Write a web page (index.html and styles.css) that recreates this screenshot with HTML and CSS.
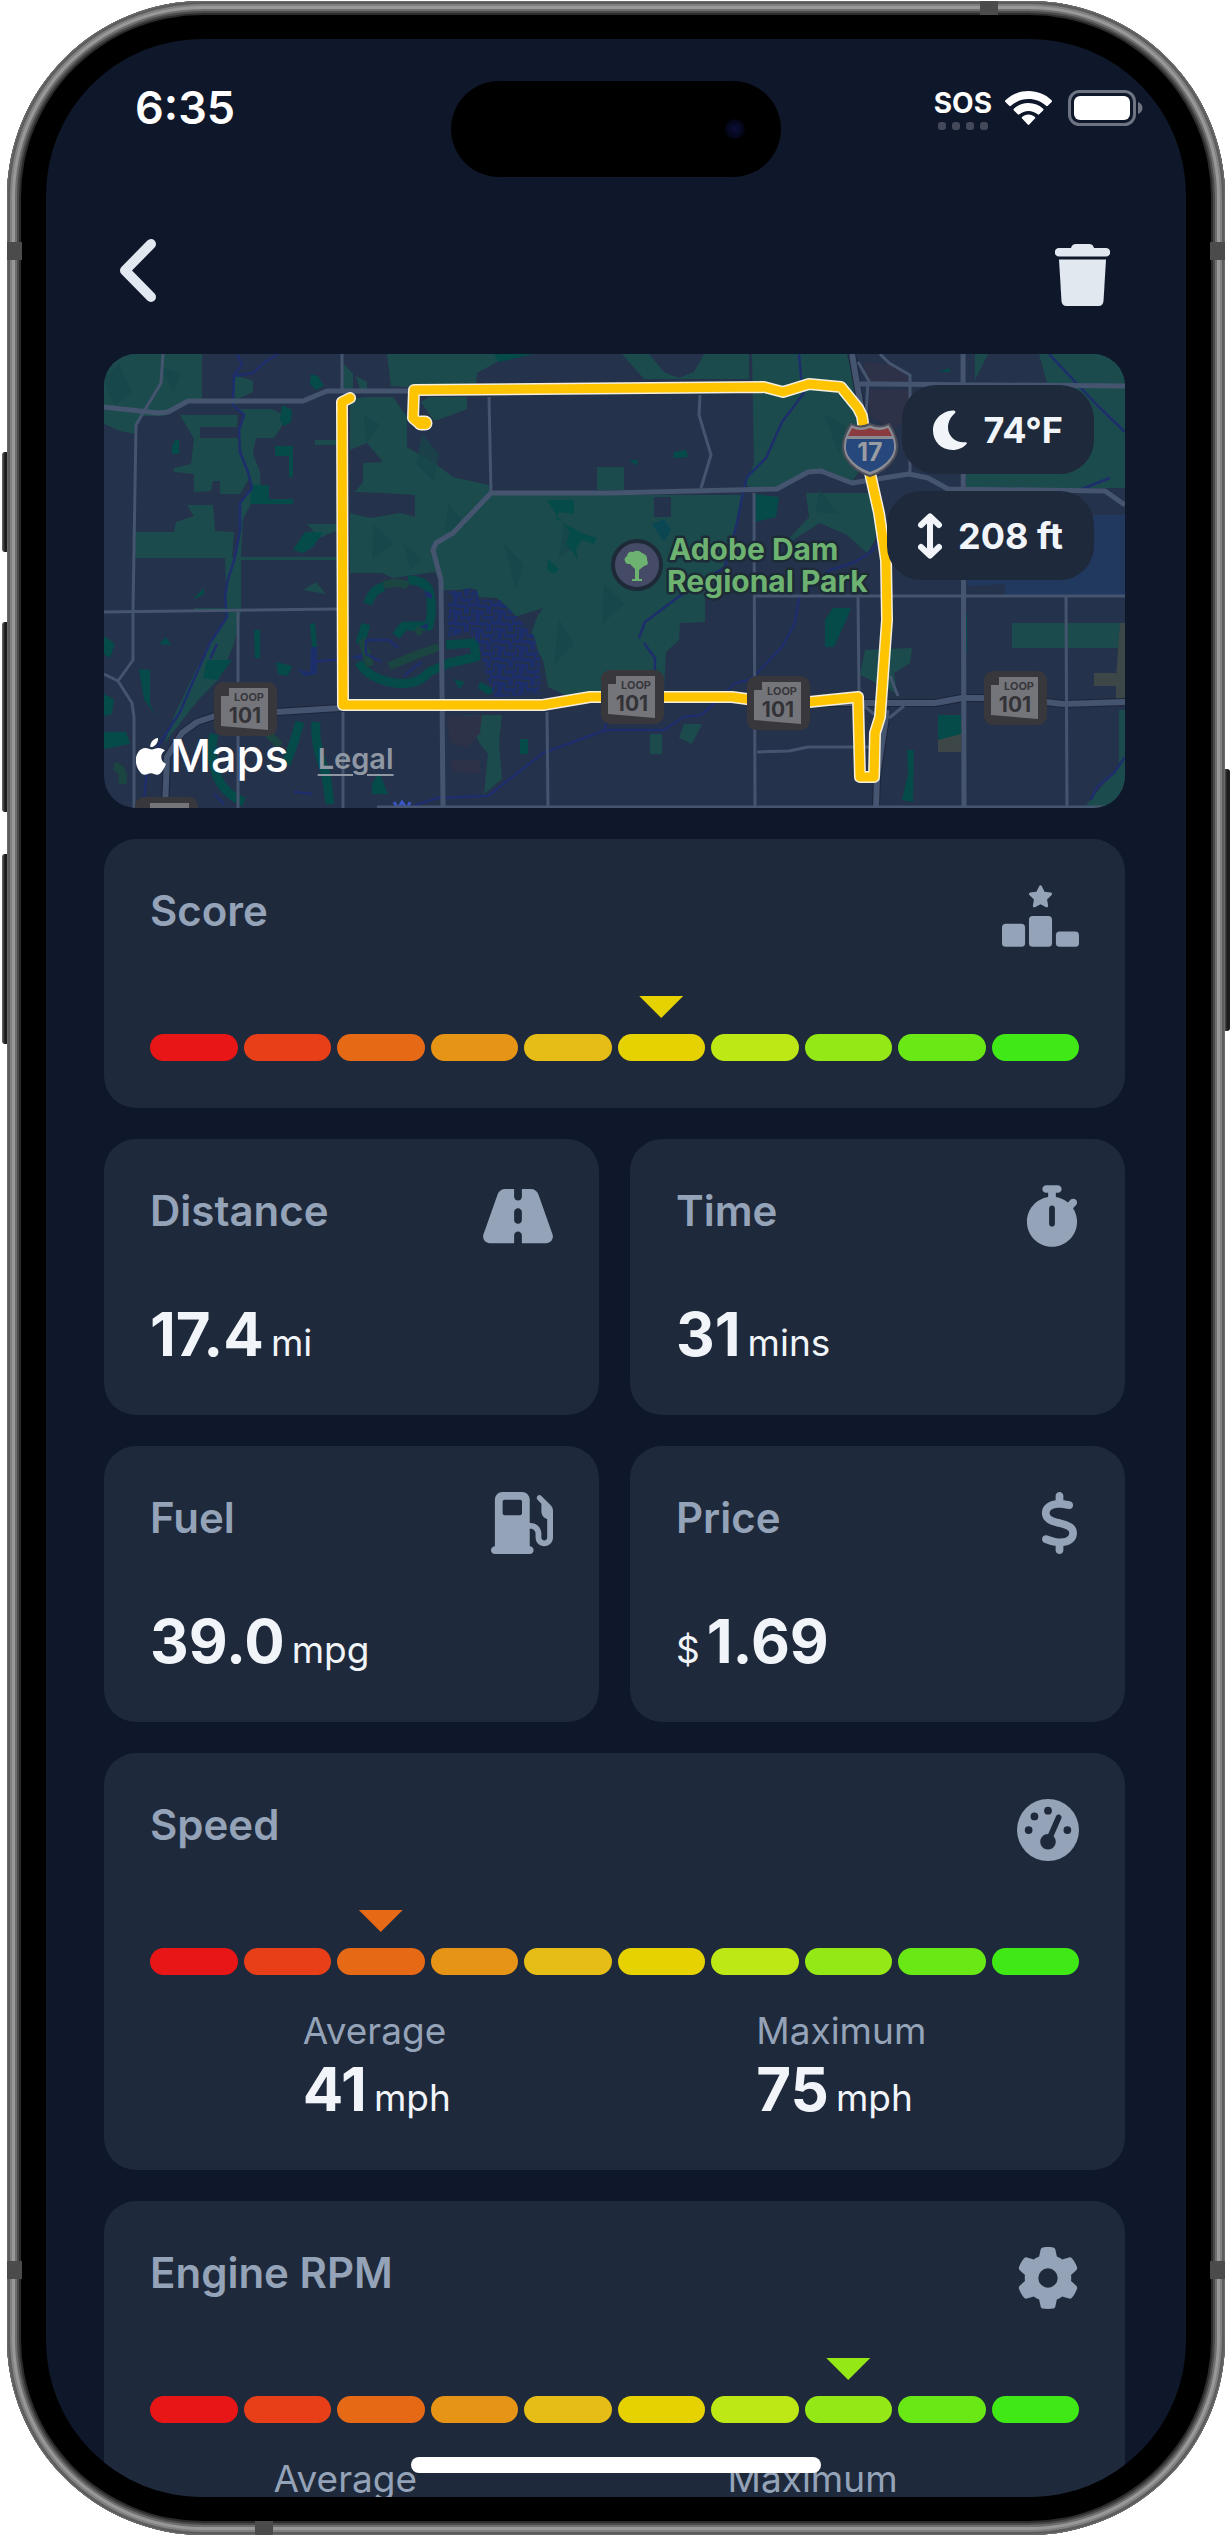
FILE: index.html
```html
<!DOCTYPE html>
<html lang="en">
<head>
<meta charset="utf-8">
<meta name="viewport" content="width=device-width, initial-scale=1">
<title>Trip details</title>
<link rel="stylesheet" href="styles.css">
</head>
<body>
<div class="device">
  <span class="key key-action"></span>
  <span class="key key-up"></span>
  <span class="key key-down"></span>
  <span class="key key-power"></span>
  <div class="frame">
    <span class="band band-left-top"></span>
    <span class="band band-right-top"></span>
    <span class="band band-left-bottom"></span>
    <span class="band band-right-bottom"></span>
    <span class="band band-top"></span>
    <span class="band band-bottom"></span>
    <div class="screen">
      <div class="status">
        <span class="clock">6:35</span>
        <div class="island"><span class="lens"></span></div>
        <div class="signals">
          <div class="sos">
            <span>SOS</span>
            <div class="dots"><i></i><i></i><i></i><i></i></div>
          </div>
          <svg class="wifi" viewBox="0 0 47 34" width="47" height="34" aria-hidden="true">
            <path fill="#fff" d="M23.500 0C14.500 0 6.300 3.500 .400 9.200a1.200 1.200 0 0 0 0 1.700l3.800 3.900a1.200 1.200 0 0 0 1.700 0C10.500 10.600 16.700 8 23.500 8s13 2.600 17.600 6.800a1.200 1.200 0 0 0 1.700 0l3.800-3.900a1.200 1.200 0 0 0 0-1.700C40.700 3.500 32.500 0 23.500 0z"/>
            <path fill="#fff" d="M23.500 12c-5.700 0-10.800 2.200-14.600 5.700a1.200 1.200 0 0 0 0 1.700l3.900 3.900a1.200 1.200 0 0 0 1.600 0c2.400-2.100 5.600-3.400 9.100-3.400s6.700 1.300 9.100 3.400a1.200 1.200 0 0 0 1.600 0l3.900-3.900a1.200 1.200 0 0 0 0-1.700C34.300 14.200 29.200 12 23.500 12z"/>
            <path fill="#fff" d="M23.500 23.600c-2.500 0-4.700.9-6.400 2.400a1.100 1.100 0 0 0 0 1.600l5.600 5.900a1.100 1.100 0 0 0 1.600 0l5.600-5.900a1.100 1.100 0 0 0 0-1.600c-1.700-1.500-3.900-2.400-6.400-2.400z"/>
          </svg>
          <svg class="battery" viewBox="0 0 75 36" width="75" height="36" aria-hidden="true">
            <rect x="1.500" y="1.500" width="65" height="33" rx="10" fill="none" stroke="#6f7482" stroke-width="3"/>
            <rect x="6" y="6" width="56" height="24" rx="6" fill="#fff"/>
            <path d="M70 12c3 1 4.500 3.500 4.500 6s-1.500 5-4.500 6z" fill="#6f7482"/>
          </svg>
        </div>
      </div>

      <header class="nav">
        <button class="nav-button" type="button" aria-label="Back">
          <svg viewBox="0 0 38 65" width="38" height="65"><path d="M32 6L6 32.500L32 59" fill="none" stroke="#e2e8f0" stroke-width="10" stroke-linecap="round" stroke-linejoin="round"/></svg>
        </button>
        <button class="nav-button nav-delete" type="button" aria-label="Delete">
          <svg viewBox="0 0 55 62" width="55" height="62" fill="#e2e8f0">
            <path d="M4 4h12c1-3 2-4 5-4h13c3 0 4 1 5 4h12a4 4 0 0 1 0 8.500H4A4 4 0 0 1 4 4z"/>
            <path d="M4 15.500h47L48.500 57c-.3 3.500-2 5-5 5h-32c-3 0-4.700-1.500-5-5z"/>
          </svg>
        </button>
      </header>

      <main class="cards">
        <section class="map">
          <svg class="map-art" viewBox="0 0 1021 454" aria-hidden="true">
            <defs>
              <pattern id="maze" width="22" height="18" patternUnits="userSpaceOnUse">
                <path d="M0 3h7v6h7V2h8M3 9v6h8v3M18 6v8h-4M0 15h1" fill="none" stroke="#25324b" stroke-width="2"/>
              </pattern>
              <g id="loop">
                <rect width="63" height="54" rx="9" fill="#37373c"/>
                <path d="M15 6h39v42L7 44V14h8z" fill="#74757a"/>
                <text x="35" y="19" class="loop-word">LOOP</text>
                <text x="31" y="41" class="loop-number">101</text>
              </g>
            </defs>
            <rect width="1021" height="454" fill="#25324b"/>
            <g fill="#1b4b4d">
              <path d="M0 0H98V45L75 52 60 62H36L30 80 16 77 0 70z"/>
              <path d="M76 61H134L133 73H96V84H136L137 100 145 125 136 140H116V127H109L107 137 90 138V120L70 118V114L87 110 90 85z"/>
              <path d="M131 21L149 27V38L132 46 131 55H168L182 62 178 72 170 84H152L149 100 156 118 157 135 147 150 139 165 137 204V258L130 290 115 325 95 345 80 364 60 390 70 362 90 320 106 289 123 263 121 204 131 203 136 176V149L148 134 136 98 135 76 140 61 129 51z"/>
              <path d="M83 151H109L111 177 130 178 128 204H31V178H70L72 168 90 162z"/>
              <path d="M283 0H402L393 8 373 19 372 33H300L287 32z"/>
              <path d="M239 9L249 20V35H239zM252 22L263 28V36H256zM325 43H363V55L345 62 330 67 317 48z"/>
              <path d="M262 43H289L303 63V93L333 111 349 123 384 131 390 141H640L633 169 619 213 601 243V268L576 269 575 286 562 298 560 335 496 339 470 345 444 333 439 306 426 283 433 263 439 254 411 263 393 244 374 243 371 236H339L331 218 289 224 278 219H246V159L266 164 296 159 311 163V141L279 139 251 138 259 128V109L279 108 263 89 246 96V45z"/>
              <path d="M493 113H520V136H493zM518 0H545L560 18 575 24 590 18 600 0H645V25H540zM648 0H743L756 53 758 113 748 128 722 116H704L675 134 650 138 641 129 650 110z"/>
              <path d="M702 139H776L771 186 763 199 743 181 716 169 689 186 677 193 705 163z"/>
              <path d="M871 0H884L871 26zM935 0H1021V134H862V98L880 110 900 90H960z"/>
              <path d="M908 269H1016V294H908zM1015 356H1021V430L1010 454H980L1004 425 1015 410z"/>
              <path d="M761 296L808 294 806 309 790 319 793 340 775 330 756 321zM361 361H398L395 390 398 425 380 440 384 400 376 390zM546 380H558V400H546zM580 370H598L588 390 575 384z"/>
              <path d="M211 86H234V91H211zM203 170H234V176L215 184zM137 203H234V206H137zM90 254H130V258H90zM199 236L212 228 222 240z"/>
            </g>
            <g fill="#15464a" opacity=".7">
              <path d="M0 25L15 10 28 38 10 52zM55 12L76 20 70 38zM318 80L335 100 330 128 312 110zM260 60L275 70 262 90zM345 150L362 172 340 178zM400 190L420 210 412 236zM460 170L478 185 455 205zM270 170L290 190 268 205zM300 190L318 205 306 216zM455 265L470 290 450 310zM500 230L520 250 498 270zM720 60L742 72 735 100zM715 135L735 160 712 158z"/>
            </g>
            <g fill="#044b49">
              <path d="M178 51L188 56 187 68 180 72 176 66zM207 20L214 22 220 32 212 36 206 30zM171 92H189V123H185V102H171zM148 131H165V145H189V150H146zM201 178H219L209 193 199 199 189 196zM68 92L71 86H75V100H68zM103 306H128L113 326 99 324zM90 244L100 234V240L93 244zM55 290L62 283 67 291zM150 276H156V304H151zM206 270L211 269 213 293H208zM172 308L188 312 184 322 174 320zM35 315L46 316V350L52 362 40 345zM443 146H470V160L455 158 452 165 480 180 493 184 490 190 478 186 472 195 474 205 462 190 466 178 455 165zM444 205L455 215 450 220 443 216z"/>
              <path d="M651 140L675 143 672 163 651 168zM729 254H747L743 264 730 293H721V266zM834 361H857V380L840 389 834 385zM803 396H810L809 448 798 446 804 420zM859 254L863 260V300H859zM570 98L582 96 584 103 569 104zM525 106L534 106 533 112zM835 18L845 14 846 18zM0 282L11 290 6 304 0 300zM390 0H430L395 8zM268 430L275 418 284 440H268zM416 385H424V400H416zM376 328L392 336 384 341 374 334zM350 325L361 328 355 335zM0 378H22L26 390 0 395zM0 340L10 345 8 360 0 362z"/>
            </g>
            <g fill="none" stroke="#044b49" stroke-width="9" stroke-linejoin="round">
              <path d="M264 250Q268 235 280 233M304 226Q320 226 325 236 330 252 325 272L300 272 292 282M342 291L370 289 372 303 345 309 325 318Q312 334 285 328 262 322 255 308M262 270L256 290M196 368Q190 390 182 410M212 368Q210 390 222 420L226 450M110 380Q105 400 112 420 120 440 140 448"/>
            </g>
            <path d="M280 231Q295 226 304 232M258 285L266 312M285 312L315 300 335 293M312 275L318 279M160 375L176 392M10 412Q22 415 18 430" fill="none" stroke="#1b4540" stroke-width="8"/>
            <g fill="#1c2f6b">
              <path d="M344 238L366 234 373 236 375 246 396 246 412 262 430 282 436 305 437 340 391 343 380 315 375 290 365 278 344 283V250L350 244z"/>
              <path d="M320 236L328 240V245L322 243zM316 273L324 269 323 275zM193 315L206 318 207 293H213V320L200 322zM246 303L258 300V306z"/>
            </g>
            <path d="M344 238L366 234 373 236 375 246 396 246 412 262 430 282 436 305 437 340 391 343 380 315 375 290 365 278 344 283z" fill="url(#maze)"/>
            <path d="M863 226H901V161H1021V241H901V230L863 232z" fill="#22395f"/>
            <path d="M550 143H567V163H550z" fill="#25324b"/>
            <path d="M548 170L560 165 567 176 560 188z" fill="#0b4653"/>
            <path d="M760 8L785 10 805 22V28H762zM764 36H805V65L790 75 766 62zM343 363L378 361 376 379 363 394 346 388zM346 406H376V419L350 418z" fill="#2e3248"/>
            <path d="M1016 269H1021V345H1012V325zM834 386L857 380V398H834zM990 319H1012V332H990z" fill="#3d4747"/>

            <g fill="none" stroke="#1e2e6c" stroke-width="2.500" stroke-linejoin="round">
              <path d="M133 0L138 11 130 21 129 51 140 61 135 76 136 98 144 118 148 134 136 149V176L131 203 123 229 121 244 123 263 106 289 91 323 76 358 56 389 43 416 39 454M130 22L149 19 161 8 174 0"/>
              <path d="M695 0L697 23 700 39 678 68 662 104 643 123 638 143 633 169 621 213 577 241 541 268 535 284M540 289L551 304V316"/>
              <path d="M776 186L766 199 749 209 726 216 695 243 691 269 678 293 653 319 645 326 631 329 618 343 597 361 579 363 560 376H506L499 377 439 399 384 442 333 444 306 453M499 377L505 365"/>
              <path d="M945 0L993 51 1021 78M970 138L1006 124M1021 403L1010 419 993 433 987 446M208 308L245 304M262 286V300M262 286L285 286 294 294M262 300L278 308M300 322L312 312 318 308M113 290L106 305M110 440L120 450M190 438L208 440"/>
            </g>
            <path d="M290 448L294 455 298 448 303 455 306 448" fill="none" stroke="#3b56c4" stroke-width="3"/>

            <g fill="none" stroke="#1c263a" stroke-linejoin="round" stroke-width="8">
              <path d="M61 454L63 403 78 379 93 368 111 362 173 358 236 354M705 349H831L858 344H878L942 348 959 350 1021 348M748 0L758 59M783 356L773 423 772 454"/>
            </g>
            <g fill="none" stroke="#45546f" stroke-linejoin="round">
              <g stroke-width="3">
                <path d="M59 0L57 29 39 59 32 71 29 256V306L14 327 0 320M14 327L28 349 30 363V454M0 258L234 255M238 0V37M239 358V454M134 258V454M385 43L387 139M443 358L444 454M273 453H1021"/>
                <path d="M596 41L595 61 607 101 597 134M650 139L651 454M651 242H1021M754 243L755 339M962 242L963 454M776 0L785 9 806 21V119M653 398L685 397 704 393H766M754 8L766 29 773 31M762 60L764 28M786 322L794 342M760 352L775 364M800 352L785 364"/>
              </g>
              <g stroke-width="5">
                <path d="M0 53L54 59 64 58 84 47H199L223 37H304M339 454L337 226 329 196 332 189 349 179 387 139H506L673 135 704 118 717 117 748 129 805 120 824 124 844 135 1001 137 1021 151M859 0L860 454M752 30H773L1021 32"/>
              </g>
              <g stroke-width="6">
                <path d="M61 454L63 403 78 379 93 368 111 362 173 358 236 354M705 349H831L858 344H878L942 348 959 350 1021 348M748 0L758 59M783 356L773 423 772 454"/>
              </g>
            </g>

            <g fill="none" stroke-linejoin="round" stroke-linecap="round">
              <path stroke="#f5efdc" stroke-width="12" d="M246 44L238 48 239 351H439L486 343H628L643 345 705 348 754 343 756 423H770L771 379 776 363 783 266 782 206 775 159 766 119 758 62 754 54 737 33 705 30 679 38 660 33 310 36 309 64 316 70H322"/>
              <path stroke="#f5efdc" stroke-width="15" d="M317 69H321"/>
              <path stroke="#ffc400" stroke-width="12" d="M317 69H321"/>
              <path stroke="#ffc400" stroke-width="9" d="M246 44L238 48 239 351H439L486 343H628L643 345 705 348 754 343 756 423H770L771 379 776 363 783 266 782 206 775 159 766 119 758 62 754 54 737 33 705 30 679 38 660 33 310 36 309 64 316 70H322"/>
            </g>

            <use href="#loop" x="110" y="328"/>
            <use href="#loop" x="497" y="316"/>
            <use href="#loop" x="643" y="322"/>
            <use href="#loop" x="880" y="317"/>
            <use href="#loop" x="31" y="443"/>

            <path d="M747 70Q756 75 766 70 776 75 785 70 798 90 790 104 782 117 766 122 750 117 742 104 734 90 747 70z" fill="#8b8b93" stroke="#4c4e5a" stroke-width="2"/>
            <path d="M748 74Q757 78 766 74 775 78 784 74L788 82H744z" fill="#8a3b3f"/>
            <path d="M743 85H789Q792 96 787 103 780 113 766 118 752 113 745 103 740 96 743 85z" fill="#27487c"/>
            <text x="766" y="107" class="interstate">17</text>

            <circle cx="533" cy="211" r="24" fill="#454b66" stroke="#1f2a38" stroke-width="4"/>
            <path d="M531 225V215L526 210H523Q518 205 523 202 524 197 529 198 534 195 538 199 544 201 543 206 546 211 540 212L535 216V225H538V227H528V225z" fill="#6db270"/>
            <text class="park" x="565" y="206">Adobe Dam</text>
            <text class="park" x="563" y="238">Regional Park</text>
          </svg>
          <div class="chips">
            <div class="chip">
              <svg viewBox="0 0 34 40" width="34" height="40" aria-hidden="true"><path d="M20 0.500C9 1 0 9.500 0 20.500S8.500 40 19.500 40c6 0 11-2.500 14-6 .8-1 0-2-1.200-1.800C24 33.500 15 27 15 17.500c0-6 3-11 7-14.500 1-1 .5-2.500-2-2.500z" fill="#f1f5f9"/></svg>
              <span>74°F</span>
            </div>
            <div class="chip">
              <svg viewBox="0 0 24 46" width="24" height="46" aria-hidden="true"><path d="M12 4V42M3 12L12 3.500 21 12M3 34L12 42.500 21 34" fill="none" stroke="#f1f5f9" stroke-width="6" stroke-linecap="round" stroke-linejoin="round"/></svg>
              <span>208 ft</span>
            </div>
          </div>
          <div class="credit">
            <svg viewBox="0 0 30 37" width="30" height="37" aria-hidden="true"><path fill="#fff" d="M22 0c.3 2.500-.7 4.800-2.100 6.400-1.500 1.700-3.600 2.800-5.600 2.600-.3-2.400.9-4.700 2.200-6.200C17.900 1.200 20.200.1 22 0zM29 12.500c-2.400 1.400-3.800 3.600-3.800 6.400 0 3.300 2 5.900 4.800 6.900-.6 2-1.600 4-2.900 5.900-1.700 2.600-3.500 5.100-6.200 5.100-2.500 0-3.300-1.500-6-1.500s-3.700 1.500-6 1.500c-2.700 0-4.600-2.400-6.300-4.900C-.5 27-1.500 19.500 2 14.500c1.700-2.700 4.600-4.400 7.400-4.400 2.600 0 4.300 1.500 6.400 1.500 2 0 3.700-1.600 6.700-1.600 2.400 0 4.900 1 6.500 2.500z"/></svg>
            <span class="credit-name">Maps</span>
            <a class="legal" href="#legal">Legal</a>
          </div>
        </section>

        <section class="card">
          <div class="card-head">
            <h2>Score</h2>
            <svg viewBox="0 0 640 512" width="77" height="62" class="icon" aria-hidden="true"><path d="M353.800 54.100L330.200 6.300c-3.900-8.300-16.100-8.600-20.400 0L286.200 54.100l-52.300 7.500c-9.300 1.400-13.300 12.900-6.400 19.800l38 37-9 52.100c-1.400 9.300 8.200 16.500 16.800 12.200l46.900-24.800 46.600 24.400c8.600 4.300 18.300-2.900 16.800-12.200l-9-52.100 38-36.600c6.800-6.800 2.900-18.300-6.400-19.800z"/><rect y="320" width="192" height="192" rx="32"/><rect x="224" y="256" width="192" height="256" rx="32"/><rect x="448" y="384" width="192" height="128" rx="32"/></svg>
          </div>
          <div class="gauge">
            <i class="marker at-6"></i>
            <i class="seg s1"></i><i class="seg s2"></i><i class="seg s3"></i><i class="seg s4"></i><i class="seg s5"></i><i class="seg s6"></i><i class="seg s7"></i><i class="seg s8"></i><i class="seg s9"></i><i class="seg s10"></i>
          </div>
        </section>

        <div class="pair">
          <section class="card">
            <div class="card-head">
              <h2>Distance</h2>
              <svg viewBox="0 0 576 512" width="70" height="62" class="icon" aria-hidden="true"><path d="M256 32H181.200c-27.100 0-51.300 17.100-60.300 42.600L3.100 407.200C1.100 413 0 419.200 0 425.400C0 455.500 24.500 480 54.600 480H256V416c0-17.700 14.300-32 32-32s32 14.300 32 32v64H521.400c30.200 0 54.600-24.500 54.600-54.600c0-6.200-1.100-12.400-3.100-18.200L455.100 74.600C446 49.100 421.900 32 394.800 32H320V96c0 17.700-14.300 32-32 32s-32-14.300-32-32V32zm64 192v64c0 17.700-14.300 32-32 32s-32-14.300-32-32V224c0-17.700 14.300-32 32-32s32 14.300 32 32z"/></svg>
            </div>
            <p class="reading"><strong>17.4</strong><span>mi</span></p>
          </section>
          <section class="card">
            <div class="card-head">
              <h2>Time</h2>
              <svg viewBox="0 0 448 512" width="54" height="62" class="icon" aria-hidden="true"><path d="M176 0c-17.700 0-32 14.300-32 32s14.300 32 32 32h16V98.400C92.300 113.800 16 200 16 304c0 114.900 93.100 208 208 208s208-93.100 208-208c0-41.800-12.300-80.700-33.500-113.200l24.100-24.100c12.500-12.500 12.500-32.800 0-45.300s-32.800-12.500-45.300 0L355.700 143c-28.100-23-62.200-38.800-99.700-44.600V64h16c17.700 0 32-14.300 32-32s-14.300-32-32-32H176zm72 192V320c0 13.300-10.700 24-24 24s-24-10.700-24-24V192c0-13.300 10.700-24 24-24s24 10.700 24 24z"/></svg>
            </div>
            <p class="reading"><strong>31</strong><span>mins</span></p>
          </section>
        </div>

        <div class="pair">
          <section class="card">
            <div class="card-head">
              <h2>Fuel</h2>
              <svg viewBox="0 0 512 512" width="62" height="62" class="icon" aria-hidden="true"><path d="M32 64C32 28.700 60.700 0 96 0H256c35.300 0 64 28.700 64 64V256h8c48.600 0 88 39.400 88 88v32c0 13.300 10.700 24 24 24s24-10.700 24-24V222c-27.600-7.100-48-32.200-48-62V96L384 64c-8.800-8.800-8.800-23.200 0-32s23.200-8.800 32 0l77.300 77.300c12 12 18.700 28.300 18.700 45.300V376c0 39.800-32.200 72-72 72s-72-32.200-72-72V344c0-22.100-17.900-40-40-40h-8V448c17.700 0 32 14.300 32 32s-14.300 32-32 32H32c-17.700 0-32-14.300-32-32s14.300-32 32-32V64zM96 80v96c0 8.800 7.200 16 16 16H240c8.800 0 16-7.200 16-16V80c0-8.800-7.200-16-16-16H112c-8.800 0-16 7.200-16 16z"/></svg>
            </div>
            <p class="reading"><strong>39.0</strong><span>mpg</span></p>
          </section>
          <section class="card">
            <div class="card-head">
              <h2>Price</h2>
              <svg viewBox="0 0 320 512" width="39" height="62" class="icon" aria-hidden="true"><path d="M160 0c17.700 0 32 14.300 32 32V67.700c1.600 .2 3.100 .4 4.700 .7c.4 .1 .7 .1 1.100 .2l48 8.800c17.400 3.200 28.900 19.900 25.700 37.200s-19.900 28.900-37.200 25.700l-47.500-8.700c-31.300-4.600-58.900-1.500-78.300 6.200s-27.200 18.300-29 28.100c-2 10.700-.5 16.700 1.200 20.400c1.800 3.900 5.500 8.300 12.800 13.200c16.300 10.700 41.300 17.700 73.700 26.300l2.900 .8c28.600 7.600 63.600 16.800 89.600 33.800c14.200 9.300 27.600 21.900 35.900 39.500c8.500 17.900 10.300 37.900 6.400 59.200c-6.900 38-33.100 63.400-65.600 76.700c-13.700 5.600-28.600 9.200-44.400 11V480c0 17.700-14.300 32-32 32s-32-14.300-32-32V445.100c-.4-.1-.9-.1-1.300-.2l-.2 0c-24.400-3.800-64.500-14.300-91.500-26.300c-16.100-7.200-23.400-26.100-16.200-42.200s26.100-23.400 42.200-16.200c20.900 9.300 55.300 18.500 75.200 21.600c31.900 4.700 58.200 2 76-5.300c16.900-6.900 24.600-16.900 26.800-28.900c1.900-10.600 .4-16.700-1.300-20.400c-1.900-4-5.600-8.400-13-13.300c-16.400-10.700-41.500-17.700-74-26.300l-2.800-.7C119.400 279.300 84.400 270 58.400 253c-14.200-9.300-27.500-22-35.800-39.600c-8.400-17.900-10.100-37.900-6.100-59.200C23.700 116 52.300 91.200 84.800 78.300c13.300-5.300 27.900-8.900 43.200-11V32c0-17.700 14.300-32 32-32z"/></svg>
            </div>
            <p class="reading"><span>$</span><strong>1.69</strong></p>
          </section>
        </div>

        <section class="card">
          <div class="card-head">
            <h2>Speed</h2>
            <svg viewBox="0 0 512 512" width="62" height="62" class="icon" aria-hidden="true"><path d="M0 256a256 256 0 1 1 512 0A256 256 0 1 1 0 256zM288 96a32 32 0 1 0 -64 0 32 32 0 1 0 64 0zM256 416c35.300 0 64-28.700 64-64c0-17.400-6.900-33.100-18.100-44.600L366 161.700c5.300-12.100-.2-26.300-12.300-31.600s-26.300 .2-31.600 12.300L257.900 288c-.6 0-1.300 0-1.900 0c-35.300 0-64 28.700-64 64s28.700 64 64 64zM176 144a32 32 0 1 0 -64 0 32 32 0 1 0 64 0zM96 288a32 32 0 1 0 0-64 32 32 0 1 0 0 64zm352-32a32 32 0 1 0 -64 0 32 32 0 1 0 64 0z"/></svg>
          </div>
          <div class="gauge">
            <i class="marker at-3"></i>
            <i class="seg s1"></i><i class="seg s2"></i><i class="seg s3"></i><i class="seg s4"></i><i class="seg s5"></i><i class="seg s6"></i><i class="seg s7"></i><i class="seg s8"></i><i class="seg s9"></i><i class="seg s10"></i>
          </div>
          <dl class="stats">
            <div><dt>Average</dt><dd class="reading"><strong>41</strong><span>mph</span></dd></div>
            <div><dt>Maximum</dt><dd class="reading"><strong>75</strong><span>mph</span></dd></div>
          </dl>
        </section>

        <section class="card">
          <div class="card-head">
            <h2>Engine RPM</h2>
            <svg viewBox="0 0 512 512" width="62" height="62" class="icon" aria-hidden="true"><path d="M495.900 166.600c3.200 8.700 .5 18.400-6.400 24.600l-43.300 39.400c1.100 8.300 1.700 16.800 1.700 25.400s-.6 17.100-1.700 25.400l43.300 39.400c6.900 6.200 9.600 15.900 6.400 24.600c-4.400 11.900-9.700 23.300-15.800 34.300l-4.700 8.100c-6.600 11-14 21.400-22.100 31.200c-5.900 7.200-15.700 9.600-24.500 6.800l-55.700-17.700c-13.400 10.300-28.200 18.900-44 25.400l-12.500 57.100c-2 9.100-9 16.300-18.200 17.800c-13.800 2.300-28 3.500-42.500 3.500s-28.700-1.200-42.500-3.500c-9.200-1.500-16.200-8.700-18.200-17.800l-12.500-57.100c-15.800-6.500-30.600-15.100-44-25.400L83.100 425.900c-8.800 2.800-18.600 .3-24.500-6.800c-8.100-9.800-15.500-20.200-22.100-31.200l-4.700-8.100c-6.100-11-11.400-22.400-15.800-34.300c-3.200-8.700-.5-18.400 6.400-24.600l43.300-39.400C64.600 273.100 64 264.600 64 256s.6-17.100 1.700-25.400L22.400 191.200c-6.900-6.200-9.600-15.900-6.400-24.600c4.400-11.900 9.700-23.300 15.800-34.300l4.700-8.100c6.600-11 14-21.400 22.100-31.200c5.900-7.200 15.700-9.600 24.500-6.800l55.700 17.700c13.400-10.300 28.200-18.900 44-25.400l12.500-57.100c2-9.100 9-16.300 18.200-17.800C227.300 1.200 241.500 0 256 0s28.700 1.200 42.500 3.500c9.200 1.500 16.200 8.700 18.200 17.800l12.500 57.100c15.800 6.500 30.600 15.100 44 25.400l55.700-17.700c8.800-2.800 18.600-.3 24.500 6.800c8.100 9.800 15.500 20.200 22.100 31.200l4.700 8.100c6.100 11 11.400 22.400 15.800 34.300zM256 336a80 80 0 1 0 0-160 80 80 0 1 0 0 160z"/></svg>
          </div>
          <div class="gauge">
            <i class="marker at-8"></i>
            <i class="seg s1"></i><i class="seg s2"></i><i class="seg s3"></i><i class="seg s4"></i><i class="seg s5"></i><i class="seg s6"></i><i class="seg s7"></i><i class="seg s8"></i><i class="seg s9"></i><i class="seg s10"></i>
          </div>
          <dl class="stats stats-wide">
            <div><dt>Average</dt></div>
            <div><dt>Maximum</dt></div>
          </dl>
        </section>
      </main>
      <div class="home-bar"></div>
    </div>
  </div>
</div>
</body>
</html>
```
FILE: styles.css
```css
* { box-sizing: border-box; }

body {
  margin: 0;
  background: #fff;
  font-family: Inter, "Liberation Sans", sans-serif;
  color: #f1f5f9;
}

h2, p, dl, dd { margin: 0; }
svg { display: block; flex: none; }

/* Phone body */
.device {
  position: relative;
  height: 100vh;
  padding: 1px 7px;
}

.frame {
  position: relative;
  height: 100%;
  padding: 38px 39px;
  border-radius: 196px;
  background: #000;
  box-shadow:
    inset 0 0 0 1px #6a6a6a,
    inset 0 0 0 3px #5c5c5c,
    inset 0 0 0 5px #808080,
    inset 0 0 0 8px #989898,
    inset 0 0 0 10px #6e6e6e,
    inset 0 0 0 12px #4a4a4a,
    inset 0 0 0 14px #2b2b2b;
}

.key {
  position: absolute;
  width: 6px;
  background: linear-gradient(90deg, #6a6a6a, #1c1c1c 50%);
}
.key-action { left: 2px; top: 452px; height: 100px; border-radius: 3px 0 0 3px; }
.key-up { left: 2px; top: 622px; height: 190px; border-radius: 3px 0 0 3px; }
.key-down { left: 2px; top: 854px; height: 190px; border-radius: 3px 0 0 3px; }
.key-power { right: 2px; top: 769px; height: 262px; border-radius: 0 3px 3px 0; }

.band { position: absolute; background: #4b4b4b; }
.band-left-top { left: 0; top: 241px; width: 15px; height: 18px; }
.band-right-top { right: 0; top: 241px; width: 15px; height: 18px; }
.band-left-bottom { left: 0; bottom: 256px; width: 15px; height: 18px; }
.band-right-bottom { right: 0; bottom: 256px; width: 15px; height: 18px; }
.band-top { right: 227px; top: 0; width: 18px; height: 14px; }
.band-bottom { left: 248px; bottom: 0; width: 18px; height: 14px; }

.screen {
  position: relative;
  height: 100%;
  overflow: hidden;
  border-radius: 156px;
  background: #0f172a;
}

/* Status bar */
.status {
  display: grid;
  grid-template-columns: 1fr 330px 1fr;
  align-items: start;
  padding-top: 42px;
}

.clock {
  padding-left: 89px;
  font-size: 45px;
  line-height: 54px;
  font-weight: 600;
  color: #fff;
}

.island {
  display: flex;
  align-items: center;
  justify-content: flex-end;
  height: 96px;
  padding-right: 36px;
  border-radius: 48px;
  background: #000;
}
.lens {
  width: 20px;
  height: 20px;
  border-radius: 50%;
  background: radial-gradient(circle, #0b0f38, #04061a 60%, #000);
}

.signals {
  display: flex;
  align-items: center;
  justify-content: flex-end;
  height: 54px;
  padding-right: 43px;
}
.sos {
  margin-right: 13px;
  font-size: 28px;
  line-height: 32px;
  font-weight: 700;
  color: #fff;
}
.dots {
  display: flex;
  justify-content: space-between;
  padding: 3px 4px 0;
}
.dots i {
  width: 8px;
  height: 8px;
  border-radius: 3px;
  background: #434958;
}
.wifi { margin-right: 16px; }

/* Navigation */
.nav {
  display: flex;
  align-items: flex-start;
  justify-content: space-between;
  padding: 61px 76px 48px 73px;
}
.nav-button {
  padding: 0;
  border: 0;
  background: none;
}
.nav-delete { padding-top: 6px; }

/* Cards */
.cards {
  display: flex;
  flex-direction: column;
  gap: 31px;
  padding: 0 61px 0 58px;
}
.pair {
  display: grid;
  grid-template-columns: 1fr 1fr;
  gap: 31px;
}
.card {
  padding: 46px 46px 45px;
  border-radius: 32px;
  background: #1e293b;
}
.card-head {
  display: flex;
  justify-content: space-between;
}
.card-head h2 {
  font-size: 42px;
  line-height: 52px;
  font-weight: 600;
  color: #94a3b8;
}
.icon { fill: #94a3b8; }

.reading {
  display: flex;
  align-items: baseline;
  gap: 7px;
}
.card > .reading { padding-top: 51px; }
.reading strong { font-size: 60px; line-height: 72px; font-weight: 700; }
.reading span { font-size: 37px; line-height: 40px; }

/* Ten-step gauge with a pointer above */
.gauge {
  display: grid;
  grid-template-columns: repeat(10, 1fr);
  gap: 16px 6px;
  padding: 49px 0 2px;
}
.marker {
  justify-self: center;
  width: 44px;
  height: 22px;
  clip-path: polygon(0 0, 100% 0, 50% 100%);
}
.at-3 { grid-column: 3; background: #e66916; }
.at-6 { grid-column: 6; background: #e5d200; }
.at-8 { grid-column: 8; background: #94e816; }
.seg { grid-row: 2; height: 27px; border-radius: 14px; }
.s1 { background: #e81616; }
.s2 { background: #e83f18; }
.s3 { background: #e66916; }
.s4 { background: #e59416; }
.s5 { background: #e5bd16; }
.s6 { background: #e5d200; }
.s7 { background: #bde816; }
.s8 { background: #94e816; }
.s9 { background: #6ae816; }
.s10 { background: #40e816; }

.stats {
  display: flex;
  justify-content: space-around;
  padding-top: 31px;
}
.stats dt {
  font-size: 37px;
  line-height: 45px;
  color: #94a3b8;
}
.stats-wide { padding-bottom: 72px; }
.stats-wide > :first-child { min-width: 207px; }
.stats-wide > :last-child { min-width: 228px; }

/* Map */
.map {
  position: relative;
  overflow: hidden;
  border-radius: 32px;
}
.map-art { width: 100%; height: auto; }
.loop-word, .loop-number, .interstate {
  text-anchor: middle;
  font-weight: 700;
}
.loop-word { font-size: 11px; fill: #37373c; }
.loop-number { font-size: 21px; fill: #323237; }
.interstate { font-size: 25px; fill: #9a9ca3; }
.park {
  font-size: 30px;
  font-weight: 700;
  fill: #6db270;
  stroke: #1d2b36;
  stroke-width: 5px;
  stroke-linejoin: round;
  paint-order: stroke;
}

.chips {
  position: absolute;
  top: 31px;
  right: 31px;
  display: flex;
  flex-direction: column;
  align-items: flex-end;
  gap: 17px;
}
.chip {
  display: flex;
  align-items: center;
  gap: 16px;
  height: 89px;
  padding: 0 31px;
  border-radius: 34px;
  background: #1e293b;
  font-size: 36px;
  font-weight: 700;
}

.credit {
  position: absolute;
  left: 32px;
  bottom: 24px;
  display: flex;
  align-items: center;
  gap: 4px;
  line-height: 50px;
}
.credit-name {
  font-size: 45px;
  font-weight: 500;
  color: #fff;
}
.legal {
  margin-left: 25px;
  padding-top: 6px;
  font-size: 29px;
  font-weight: 600;
  color: #8f97a3;
  text-underline-offset: 5px;
}

.home-bar {
  position: absolute;
  left: 32%;
  right: 32%;
  bottom: 24px;
  height: 16px;
  border-radius: 8px;
  background: #fff;
}
```
